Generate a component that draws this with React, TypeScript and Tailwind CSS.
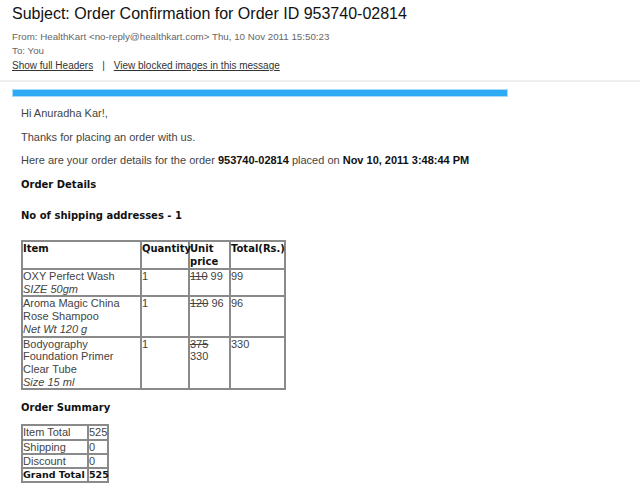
const body = "font-['Liberation_Sans',Arial,sans-serif]";
const bold = "font-['DejaVu_Sans',Verdana,sans-serif] font-bold";

type Item = {
  name: string;
  note: string;
  qty: number;
  was: number;
  price: number;
};

const items: Item[] = [
  { name: "OXY Perfect Wash", note: "SIZE 50gm", qty: 1, was: 110, price: 99 },
  { name: "Aroma Magic China Rose Shampoo", note: "Net Wt 120 g", qty: 1, was: 120, price: 96 },
  { name: "Bodyography Foundation Primer Clear Tube", note: "Size 15 ml", qty: 1, was: 375, price: 330 },
];

const summary = [
  { label: "Item Total", value: "525" },
  { label: "Shipping", value: "0" },
  { label: "Discount", value: "0" },
];

const cell = "border border-[#8a8a8a] align-top p-0 text-left";

export default function App() {
  return (
    <div className={`${body} min-h-[486px] w-[640px] bg-white`}>
      <div className="px-3 pt-1">
        <h1 className="text-[16px] leading-[20px] text-[#111]">
          Subject: Order Confirmation for Order ID 953740-02814
        </h1>
        <div className="mt-[6px] text-[9.75px] leading-[14px] text-[#666]">
          From: HealthKart &lt;no-reply@healthkart.com&gt; Thu, 10 Nov 2011 15:50:23
        </div>
        <div className="text-[9.75px] leading-[14px] text-[#666]">To: You</div>
        <div className="mt-[1px] flex gap-[9px] text-[10px] leading-[14px] text-[#333]">
          <span className="underline">Show full Headers</span>
          <span>|</span>
          <span className="underline">View blocked images in this message</span>
        </div>
      </div>

      <div className="mt-[7px] h-[2px] w-full bg-[#eeeeee]" />

      <div className="ml-3 mt-[7px] h-[8px] w-[496px] border border-[#a8dcfa] bg-[#2eaaf4]" />

      <div className="pl-[21px] text-[11px] leading-[13px] text-[#444]">
        <p className="mt-[10px]">Hi Anuradha Kar!,</p>
        <p className="mt-[11px]">Thanks for placing an order with us.</p>
        <p className="mt-[10px]">
          Here are your order details for the order{" "}
          <b className="text-[#111]">953740-02814</b> placed on{" "}
          <b className="text-[#111]">Nov 10, 2011 3:48:44 PM</b>
        </p>
        <p className={`${bold} mt-[11px] text-[10px] text-[#111]`}>Order Details</p>
        <p className={`${bold} mt-[18px] text-[10px] text-[#111]`}>
          No of shipping addresses - 1
        </p>

        <table className="mt-[18px] w-[265px] table-fixed border-separate border-spacing-0 border border-[#8a8a8a] leading-[12.7px]">
          <colgroup>
            <col className="w-[119px]" />
            <col className="w-[48px]" />
            <col className="w-[41px]" />
            <col className="w-[55px]" />
          </colgroup>
          <thead>
            <tr className={`${bold} text-[10px] leading-[13px] text-[#111]`}>
              <th className={`${cell} h-[28px]`}>Item</th>
              <th className={`${cell} whitespace-nowrap`}>Quantity</th>
              <th className={cell}>Unit price</th>
              <th className={cell}>Total(Rs.)</th>
            </tr>
          </thead>
          <tbody>
            {items.map((item) => (
              <tr key={item.name}>
                <td className={cell}>
                  <div>{item.name}</div>
                  <div className="italic">{item.note}</div>
                </td>
                <td className={cell}>{item.qty}</td>
                <td className={cell}>
                  <s>{item.was}</s> {item.price}
                </td>
                <td className={cell}>{item.price}</td>
              </tr>
            ))}
          </tbody>
        </table>

        <p className={`${bold} mt-[11px] text-[10px] text-[#111]`}>Order Summary</p>

        <table className="mt-[10px] w-[88px] table-fixed border-separate border-spacing-0 border border-[#8a8a8a] leading-[12.25px]">
          <colgroup>
            <col className="w-[66px]" />
            <col className="w-[20px]" />
          </colgroup>
          <tbody>
            {summary.map((row) => (
              <tr key={row.label}>
                <td className={cell}>{row.label}</td>
                <td className={cell}>{row.value}</td>
              </tr>
            ))}
            <tr className={`${bold} text-[9.5px] text-[#111]`}>
              <td className={`${cell} whitespace-nowrap`}>Grand Total</td>
              <td className={`${cell} whitespace-nowrap`}>525</td>
            </tr>
          </tbody>
        </table>
      </div>
    </div>
  );
}
